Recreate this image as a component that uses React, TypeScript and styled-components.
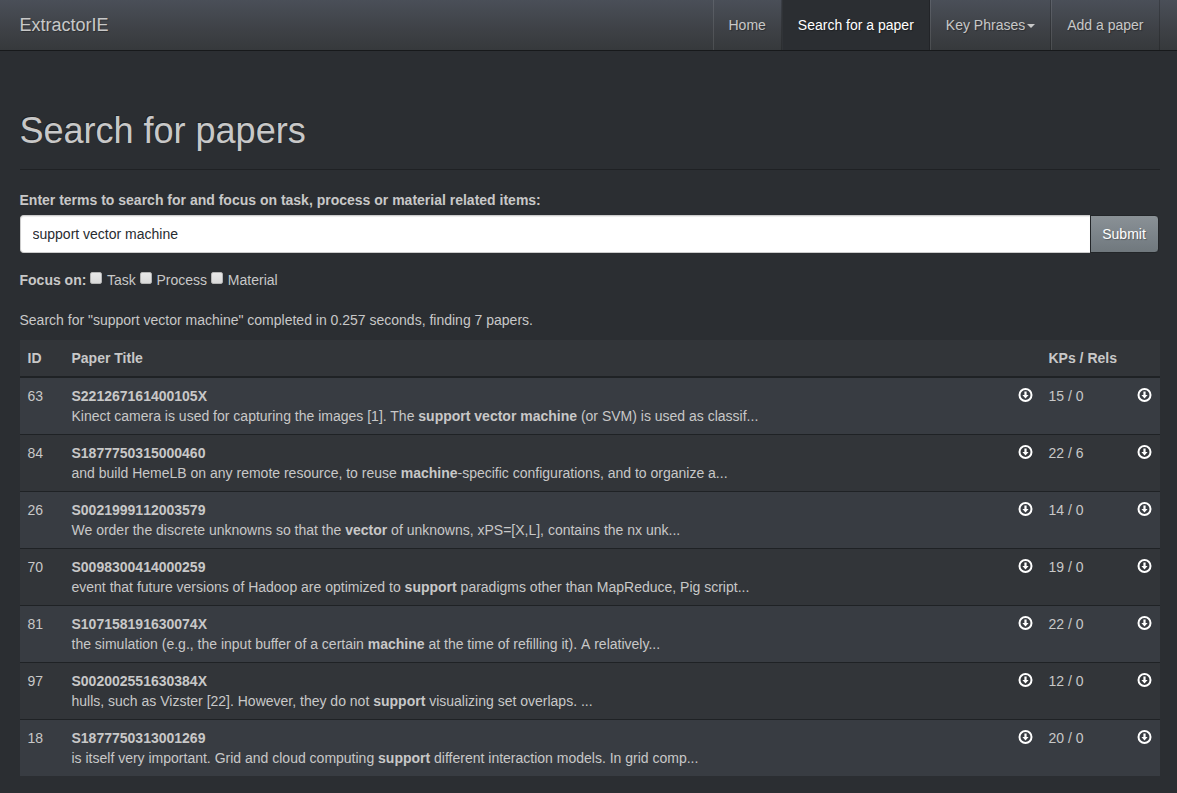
import React from "react";
import styled, { createGlobalStyle } from "styled-components";

const GlobalStyle = createGlobalStyle`
  *, *::before, *::after { box-sizing: border-box; }
  body {
    margin: 0;
    background: #2b2e32;
    color: #c8c8c8;
    font-family: "Liberation Sans", Arial, sans-serif;
    font-size: 14px;
    line-height: 20px;
  }
`;

const Navbar = styled.nav`
  height: 51px;
  border-bottom: 1px solid #17191b;
  background: linear-gradient(#4a4f58, #3e4146 60%, #36393c);
  text-shadow: 1px 1px 1px rgba(0, 0, 0, 0.3);
`;

const Container = styled.div`
  width: 1140px;
  margin-left: 19.5px;
`;

const NavInner = styled(Container)`
  display: flex;
  justify-content: space-between;
`;

const Brand = styled.a`
  padding: 15px 0;
  font-size: 18px;
  line-height: 20px;
`;

const NavList = styled.ul`
  display: flex;
  margin: 0;
  padding: 0;
  list-style: none;
`;

const NavLink = styled.a<{ $active?: boolean }>`
  display: block;
  height: 50px;
  padding: 15px;
  border-left: 1px solid rgba(255, 255, 255, 0.1);
  border-right: 1px solid rgba(0, 0, 0, 0.2);
  ${(p) =>
    p.$active &&
    `color: #fff; background: #2b2e32; border-left-color: #303337;`}
`;

const Caret = styled.b`
  display: inline-block;
  margin-left: 2px;
  vertical-align: middle;
  border-top: 4px solid currentColor;
  border-left: 4px solid transparent;
  border-right: 4px solid transparent;
`;

const PageHeader = styled.header`
  margin: 60px 0 20px;
  padding-bottom: 18px;
  border-bottom: 1px solid #1f2124;
`;

const Title = styled.h1`
  margin: 0;
  font-size: 36px;
  line-height: 40px;
  font-weight: 400;
  text-shadow: -1px -1px 0 rgba(0, 0, 0, 0.3);
`;

const FieldLabel = styled.label`
  display: block;
  margin-bottom: 5px;
  font-weight: 700;
`;

const InputGroup = styled.div`
  display: flex;
  height: 38px;
  margin-bottom: 17px;
`;

const SearchInput = styled.input`
  flex: 1;
  min-width: 0;
  padding: 8px 12px;
  border: 1px solid #ccc;
  border-right: 0;
  border-radius: 4px 0 0 4px;
  background: #fff;
  color: #272b30;
  font: inherit;
  box-shadow: inset 0 1px 1px rgba(0, 0, 0, 0.075);
  outline: none;
`;

const SubmitButton = styled.button`
  margin-right: 0.7px;
  padding: 8px 12px 8px 11.2px;
  border: 1px solid #232629;
  border-radius: 0 4px 4px 0;
  background: linear-gradient(#8a9196, #7a8288 60%, #70787d);
  color: #fff;
  font: inherit;
  text-shadow: 1px 1px 1px rgba(0, 0, 0, 0.3);
`;

const FocusRow = styled.div`
  margin-bottom: 20px;
`;

const Checkbox = styled.input`
  appearance: none;
  width: 12px;
  height: 12px;
  margin: 0 1px 1px 0;
  vertical-align: baseline;
  border: 1px solid #b4b4b4;
  border-radius: 2px;
  background: linear-gradient(#e8e8e8, #dadada);
`;

const Summary = styled.p`
  margin: 0 0 10px;
`;

const Table = styled.table`
  width: 100%;
  table-layout: fixed;
  border-spacing: 0;
  background: #323539;
`;

const HeadCell = styled.th`
  padding: 8px;
  border-bottom: 2px solid #1f2225;
  text-align: left;
`;

const Row = styled.tr`
  &:nth-child(odd) { background: #383c42; }
  & + & > td { border-top: 1px solid #1f2225; }
`;

const Cell = styled.td`
  padding: 8px;
  vertical-align: top;
  white-space: nowrap;
`;

const PaperCode = styled.b`
  font-kerning: none;
`;

const Unkerned = styled.span`
  font-kerning: none;
`;

const IconSvg = styled.svg`
  display: block;
  width: 15px;
  height: 14px;
  margin: 2px -1px 0 -0.6px;
`;

const DownloadIcon = () => (
  <IconSvg viewBox="0 0 15 14">
    <circle cx="7.5" cy="7" r="6" fill="none" stroke="#fff" strokeWidth="2" />
    <path d="M6.4 3.5h2.2v3.4h2L7.5 10.6 4.4 6.9h2z" fill="#fff" />
  </IconSvg>
);

type Paper = {
  id: number;
  title: string;
  before: React.ReactNode;
  match: string;
  after: React.ReactNode;
  counts: string;
};

const papers: Paper[] = [
  { id: 63, title: "S221267161400105X", before: "Kinect camera is used for capturing the images [1]. The ", match: "support vector machine", after: " (or SVM) is used as classif...", counts: "15 / 0" },
  { id: 84, title: "S1877750315000460", before: "and build HemeLB on any remote resource, to reuse ", match: "machine", after: "-specific configurations, and to organize a...", counts: "22 / 6" },
  { id: 26, title: "S0021999112003579", before: "We order the discrete unknowns so that the ", match: "vector", after: " of unknowns, xPS=[X,L], contains the nx unk...", counts: "14 / 0" },
  { id: 70, title: "S0098300414000259", before: "event that future versions of Hadoop are optimized to ", match: "support", after: " paradigms other than MapReduce, Pig script...", counts: "19 / 0" },
  { id: 81, title: "S107158191630074X", before: "the simulation (e.g., the input buffer of a certain ", match: "machine", after: <> at the time of refilling it).<Unkerned> A </Unkerned>relatively...</>, counts: "22 / 0" },
  { id: 97, title: "S002002551630384X", before: "hulls, such as Vizster [22]. However, they do not ", match: "support", after: " visualizing set overlaps. ...", counts: "12 / 0" },
  { id: 18, title: "S1877750313001269", before: "is itself very important. Grid and cloud computing ", match: "support", after: " different interaction models. In grid comp...", counts: "20 / 0" },
];

export default function App() {
  return (
    <>
      <GlobalStyle />
      <Navbar>
        <NavInner>
          <Brand>ExtractorIE</Brand>
          <NavList>
            <li><NavLink>Home</NavLink></li>
            <li><NavLink $active>Search for a paper</NavLink></li>
            <li><NavLink>Key Phrases<Caret /></NavLink></li>
            <li><NavLink>Add a paper</NavLink></li>
          </NavList>
        </NavInner>
      </Navbar>
      <Container as="main">
        <PageHeader><Title>Search for papers</Title></PageHeader>
        <FieldLabel htmlFor="terms">
          Enter terms to search for and focus on task, process or material related items:
        </FieldLabel>
        <InputGroup>
          <SearchInput id="terms" defaultValue="support vector machine" />
          <SubmitButton>Submit</SubmitButton>
        </InputGroup>
        <FocusRow>
          <b>Focus on:</b> <Checkbox type="checkbox" /> Task <Checkbox type="checkbox" /> Process{" "}
          <Checkbox type="checkbox" /> Material
        </FocusRow>
        <Summary>Search for "support vector machine" completed in 0.257 seconds, finding 7 papers.</Summary>
        <Table>
          <colgroup>
            <col style={{ width: 44 }} />
            <col />
            <col style={{ width: 30 }} />
            <col style={{ width: 89 }} />
            <col style={{ width: 30 }} />
          </colgroup>
          <thead>
            <tr>
              <HeadCell>ID</HeadCell>
              <HeadCell>Paper Title</HeadCell>
              <HeadCell />
              <HeadCell>KPs / Rels</HeadCell>
              <HeadCell />
            </tr>
          </thead>
          <tbody>
            {papers.map((p) => (
              <Row key={p.id}>
                <Cell>{p.id}</Cell>
                <Cell>
                  <PaperCode>{p.title}</PaperCode>
                  <br />
                  {p.before}<b>{p.match}</b>{p.after}
                </Cell>
                <Cell><DownloadIcon /></Cell>
                <Cell>{p.counts}</Cell>
                <Cell><DownloadIcon /></Cell>
              </Row>
            ))}
          </tbody>
        </Table>
      </Container>
    </>
  );
}
